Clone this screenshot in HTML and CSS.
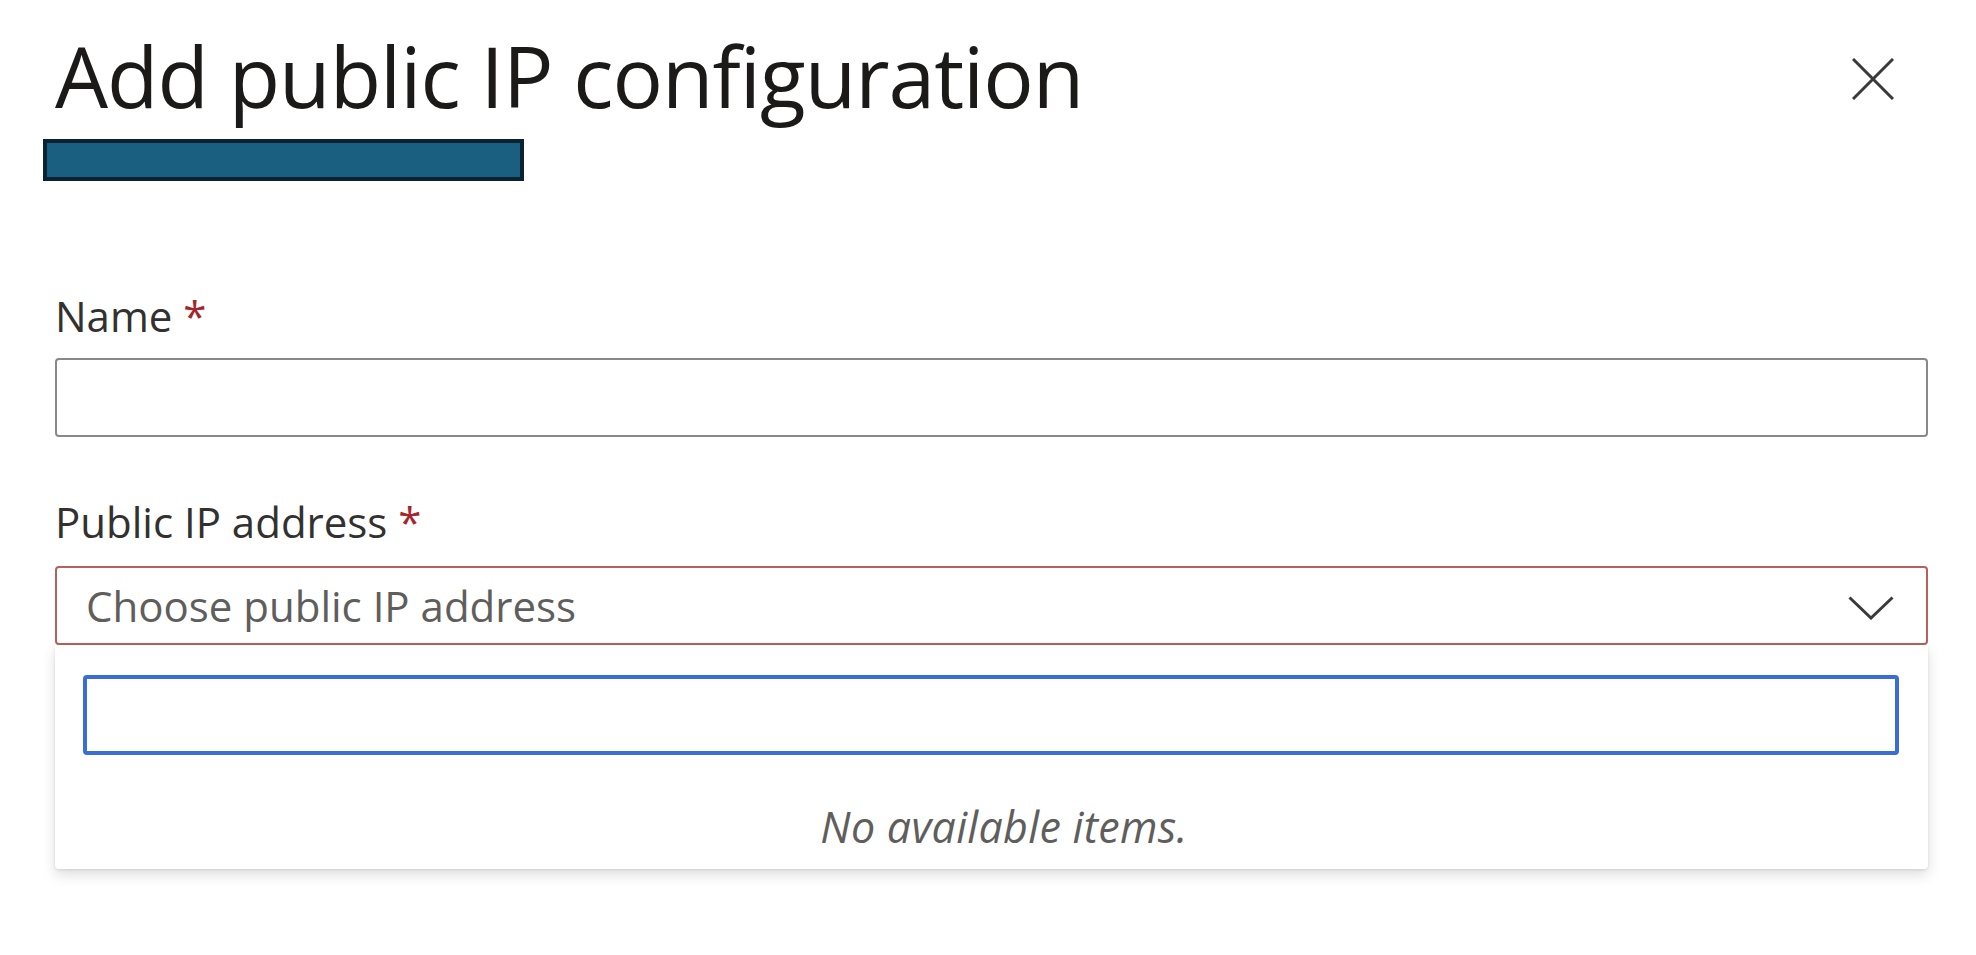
FILE: index.html
```html
<!DOCTYPE html>
<html lang="en">
<head>
<meta charset="utf-8">
<title>Add public IP configuration</title>
<link rel="stylesheet" href="styles.css">
</head>
<body>
<div class="pane">
  <header class="pane-header">
    <div class="title-block">
      <h1 class="title">Add public IP configuration</h1>
      <div class="redaction"></div>
    </div>
    <button class="close" aria-label="Close">
      <svg viewBox="0 0 42 42" width="42" height="42"><path d="M1 1 L41 41 M41 1 L1 41" stroke="#3b3a39" stroke-width="3" fill="none"/></svg>
    </button>
  </header>
  <form class="form">
    <div class="field">
      <label class="label">Name <span class="req">*</span></label>
      <div class="textbox"></div>
    </div>
    <div class="field field-ip">
      <label class="label">Public IP address <span class="req">*</span></label>
      <div class="dropdown">
        <div class="select">
          <span class="placeholder">Choose public IP address</span>
          <svg class="chevron" viewBox="0 0 46 24" width="46" height="24"><path d="M1.5 1.5 L23 22 L44.5 1.5" stroke="#3b3a39" stroke-width="3" fill="none"/></svg>
        </div>
        <div class="menu">
          <div class="search"></div>
          <div class="empty">No available items.</div>
        </div>
      </div>
    </div>
  </form>
</div>
</body>
</html>
```

FILE: styles.css
```css
* { box-sizing: border-box; }
html, body { margin: 0; background: #ffffff; }
body {
  font-family: "Open Sans", "Noto Sans", "Liberation Sans", sans-serif;
  color: #323130;
}
.pane {
  padding: 0 48px 0 55px;
  width: 1976px;
  height: 955px;
}
.pane-header {
  display: flex;
  justify-content: space-between;
  align-items: flex-start;
}
.title-block { display: flex; flex-direction: column; }
.title {
  margin: 0;
  padding-top: 24px;
  font-size: 84px;
  line-height: 104px;
  font-weight: 500;
  color: #1b1a19;
  letter-spacing: -1px;
}
.redaction {
  margin-top: 11px;
  margin-left: -12px;
  width: 481px;
  height: 42px;
  background: #1a5e80;
  border: 4px solid #0b2233;
}
.close {
  margin: 58px 34px 0 0;
  padding: 0;
  border: 0;
  background: transparent;
  width: 42px;
  height: 42px;
  display: flex;
}
.form { display: flex; flex-direction: column; }
.field { display: flex; flex-direction: column; }
.label {
  font-size: 42px;
  line-height: 54px;
  color: #323130;
}
.field:first-child .label { margin-top: 108px; }
.req { color: #a4262c; }
.field .textbox {
  margin-top: 15px;
  height: 79px;
  border: 2px solid #8a8886;
  border-radius: 4px;
}
.field-ip .label { margin-top: 58px; }
.dropdown { margin-top: 17px; position: relative; }
.select {
  height: 79px;
  border: 2px solid #b8605e;
  border-radius: 4px;
  display: flex;
  align-items: center;
  justify-content: space-between;
  padding: 0 32px 0 29px;
}
.placeholder {
  font-size: 42px;
  color: #605e5c;
}
.chevron { margin-top: 4px; }
.menu {
  position: absolute;
  left: 0;
  right: 0;
  top: 79px;
  height: 224px;
  background: #fff;
  border-radius: 0 0 4px 4px;
  box-shadow: 0 6px 14px rgba(0,0,0,0.13), 0 1px 3px rgba(0,0,0,0.10);
  padding: 30px 29px 0 28px;
  display: flex;
  flex-direction: column;
}
.search {
  height: 80px;
  border: 4px solid #3a6dd6;
  border-radius: 4px;
}
.empty {
  margin-top: 42px;
  text-align: center;
  padding-left: 26px;
  font-style: italic;
  font-size: 43px;
  color: #605e5c;
  letter-spacing: 0.3px;
}
```
